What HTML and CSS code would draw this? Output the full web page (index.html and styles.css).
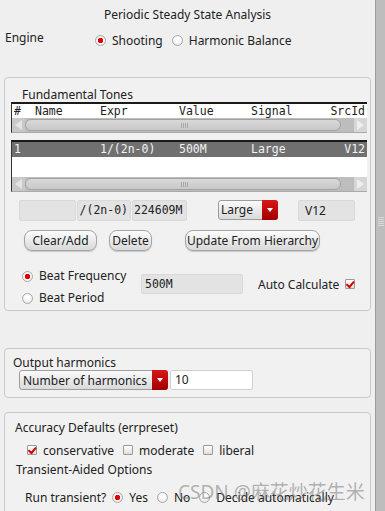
FILE: index.html
```html
<!DOCTYPE html>
<html lang="en">

<head>
  <meta charset="UTF-8">
  <meta name="viewport" content="width=device-width, initial-scale=1.0">
  <title>Periodic Steady State Analysis</title>
  <link rel="stylesheet" href="styles.css">
</head>

<body>
  <div class="window">
    <div class="main">
      <div class="title">Periodic Steady State Analysis</div>

      <div class="engine-row">
        <span class="engine-label">Engine</span>
        <label class="radio on">Shooting</label>
        <label class="radio">Harmonic Balance</label>
      </div>

      <!-- Fundamental tones -->
      <section class="panel tones">
        <div class="group-label">Fundamental Tones</div>

        <div class="table head-table">
          <div class="row header">
            <span class="c-num">#</span>
            <span class="c-name">Name</span>
            <span class="c-expr">Expr</span>
            <span class="c-value">Value</span>
            <span class="c-signal">Signal</span>
            <span class="c-src">SrcId</span>
          </div>
          <div class="hscroll">
            <span class="arrow left"></span>
            <span class="thumb"><span class="grip"></span></span>
            <span class="arrow right"></span>
          </div>
        </div>

        <div class="table body-table">
          <div class="row selected">
            <span class="c-num">1</span>
            <span class="c-name"></span>
            <span class="c-expr">1/(2n-0)</span>
            <span class="c-value">500M</span>
            <span class="c-signal">Large</span>
            <span class="c-src">V12</span>
          </div>
          <div class="blank"></div>
          <div class="hscroll">
            <span class="arrow left"></span>
            <span class="thumb"><span class="grip"></span></span>
            <span class="arrow right"></span>
          </div>
        </div>

        <div class="edit-row">
          <span class="field f-name"></span>
          <span class="field f-expr mono">/(2n-0)</span>
          <span class="field f-value mono">224609M</span>
          <span class="combo c-large">Large<span class="drop"></span></span>
          <span class="field f-src">V12</span>
        </div>

        <div class="button-row">
          <button class="btn b-clear">Clear/Add</button>
          <button class="btn b-delete">Delete</button>
          <button class="btn b-update">Update From Hierarchy</button>
        </div>

        <div class="beat-row">
          <div class="beat-choices">
            <label class="radio on">Beat Frequency</label>
            <label class="radio">Beat Period</label>
          </div>
          <span class="field f-beat mono">500M</span>
          <span class="auto">Auto Calculate <span class="check on"></span></span>
        </div>
      </section>

      <!-- Output harmonics -->
      <section class="panel harmonics">
        <div class="group-label">Output harmonics</div>
        <div class="harm-row">
          <span class="combo c-harm">Number of harmonics<span class="drop"></span></span>
          <span class="entry">10</span>
        </div>
      </section>

      <!-- Accuracy -->
      <section class="panel accuracy">
        <div class="group-label">Accuracy Defaults (errpreset)</div>
        <div class="check-row">
          <label class="check-item"><span class="check on"></span>conservative</label>
          <label class="check-item"><span class="check"></span>moderate</label>
          <label class="check-item"><span class="check"></span>liberal</label>
        </div>
        <div class="sub-label">Transient-Aided Options</div>
        <div class="tran-row">
          <span class="tran-label">Run transient?</span>
          <label class="radio on">Yes</label>
          <label class="radio">No</label>
          <label class="radio">Decide automatically</label>
        </div>
        <div class="watermark">CSDN @麻花炒花生米</div>
      </section>
    </div>

    <div class="vscroll"><span class="vgrip"></span></div>
  </div>
</body>

</html>
```

FILE: styles.css
```css
body {
  margin: 0;
  background-color: #efefef;
  color: #222;
  font-family: 'Noto Sans', 'Open Sans', sans-serif;
  font-size: 12px;
}

.window {
  display: flex;
  height: 511px;
  overflow: hidden;
}

.main {
  width: 375px;
}

.vscroll {
  width: 9px;
  border-left: 1px solid #9c9c9c;
  background-color: #bdbdbd;
  display: flex;
  justify-content: center;
}

.vgrip {
  margin-top: 217px;
  width: 6px;
  height: 9px;
  background: repeating-linear-gradient(#d8d8d8 0 1px, transparent 1px 2px);
}

.mono {
  font-family: 'DejaVu Sans Mono', monospace;
  font-size: 11.5px;
}

/* title + engine */
.title {
  text-align: center;
  line-height: 16px;
  padding-top: 7px;
}

.engine-row {
  display: flex;
  align-items: center;
  margin-top: 8px;
  height: 16px;
  padding-left: 5px;
}

.engine-label {
  width: 90px;
  margin-top: -3px;
}

.radio {
  display: inline-flex;
  align-items: center;
  white-space: nowrap;
}

.radio::before {
  content: '';
  width: 9px;
  height: 9px;
  margin-right: 6px;
  border-radius: 50%;
  border: 1px solid #a8a8a8;
  background: radial-gradient(circle at 50% 40%, #ffffff 30%, #dcdcdc 100%);
  box-sizing: content-box;
}

.radio.on::before {
  background: radial-gradient(circle, #e00000 0 2.5px, #ffffff 3px, #dcdcdc 100%);
}

.engine-row .radio {
  margin-right: 9px;
  margin-top: 3px;
}

/* panels */
.panel {
  margin-left: 4px;
  width: 365px;
  border: 1px solid #c9c9c9;
  border-radius: 4px;
  background-color: #f1f1f1;
  position: relative;
}

.group-label {
  line-height: 14px;
}

.tones {
  margin-top: 30px;
  height: 222px;
  padding-top: 10px;
}

.tones .group-label {
  padding-left: 17px;
  height: 14px;
}

/* tables */
.table {
  margin-left: 6px;
  width: 355px;
  background-color: #fff;
  border-top: 2px solid #1a1a1a;
  border-left: 1px solid #333;
  border-bottom: 1px solid #aaa;
  font-family: 'DejaVu Sans Mono', monospace;
  font-size: 11.5px;
}

.body-table {
  margin-top: 7px;
}

.row {
  display: flex;
  height: 14px;
  line-height: 14px;
  white-space: nowrap;
}

.row.selected {
  background-color: #707070;
  color: #f2f2f2;
  height: 15px;
  line-height: 15px;
}

.c-num {
  width: 21px;
  padding-left: 2px;
}

.c-name {
  width: 65px;
}

.c-expr {
  width: 79px;
}

.c-value {
  width: 72px;
}

.c-signal {
  width: 72px;
}

.c-src {
  flex: 1;
  text-align: right;
  padding-right: 2px;
}

.blank {
  height: 20px;
}

.hscroll {
  display: flex;
  height: 14px;
  background-color: #bdbdbd;
}

.arrow {
  width: 13px;
  background-color: #c9c9c9;
  display: flex;
  align-items: center;
  justify-content: center;
}

.arrow.right {
  background-color: #d6d6d6;
  margin-left: auto;
}

.arrow::before {
  content: '';
  width: 0;
  height: 0;
  border-top: 5px solid transparent;
  border-bottom: 5px solid transparent;
}

.arrow.left::before {
  border-right: 7px solid #e4e4e4;
}

.arrow.right::before {
  border-left: 7px solid #eeeeee;
}

.thumb {
  flex: none;
  width: 314px;
  margin: 1px 0;
  border: 1px solid #a2a2a2;
  border-radius: 7px;
  background: linear-gradient(#d9d9d9, #c8c8c8);
  display: flex;
  align-items: center;
  justify-content: center;
}

.grip {
  width: 8px;
  height: 5px;
  margin-left: 4px;
  background: repeating-linear-gradient(90deg, #a9a9a9 0 1px, transparent 1px 2px);
}

/* edit row */
.edit-row {
  display: flex;
  align-items: center;
  margin-top: 8px;
  height: 21px;
  padding-left: 14px;
}

.field {
  box-sizing: border-box;
  height: 21px;
  line-height: 19px;
  background-color: #e3e3e3;
  border: 1px solid #d9d9d9;
  border-radius: 2px;
  white-space: nowrap;
}

.f-name {
  width: 57px;
}

.f-expr {
  width: 54px;
  margin-left: 1px;
  text-align: right;
  padding-right: 2px;
}

.f-value {
  width: 55px;
  margin-left: 1px;
  padding-left: 1px;
}

.f-src {
  width: 57px;
  margin-left: 20px;
  padding-left: 6px;
}

.combo {
  box-sizing: border-box;
  display: flex;
  align-items: center;
  height: 20px;
  padding-left: 2px;
  border: 1px solid #9d9d9d;
  border-radius: 3px;
  background: linear-gradient(#fafafa, #dadada);
  white-space: nowrap;
}

.drop {
  margin-left: auto;
  width: 16px;
  align-self: stretch;
  margin-top: -1px;
  margin-bottom: -1px;
  margin-right: -1px;
  border-radius: 0 3px 3px 0;
  background: linear-gradient(#d81818, #a20000);
  display: flex;
  align-items: center;
  justify-content: center;
}

.drop::before {
  content: '';
  border-left: 3px solid transparent;
  border-right: 3px solid transparent;
  border-top: 4px solid #fff;
}

.c-large {
  width: 60px;
  margin-left: 31px;
  margin-top: -2px;
}

/* buttons */
.button-row {
  display: flex;
  margin-top: 9px;
  padding-left: 19px;
}

.btn {
  box-sizing: border-box;
  height: 21px;
  padding: 0;
  font-family: inherit;
  font-size: 12px;
  color: #222;
  border: 1px solid #a5a5a5;
  border-radius: 8px;
  background: linear-gradient(#fdfdfd, #d8d8d8);
  box-shadow: 0 1px 1px rgba(0, 0, 0, 0.18);
}

.b-clear {
  width: 73px;
}

.b-delete {
  width: 43px;
  margin-left: 12px;
}

.b-update {
  width: 135px;
  margin-left: 33px;
}

/* beat */
.beat-row {
  display: flex;
  align-items: center;
  margin-top: 17px;
  padding-left: 17px;
}

.beat-choices {
  display: flex;
  flex-direction: column;
  width: 119px;
}

.beat-choices .radio {
  height: 16px;
  line-height: 16px;
}

.beat-choices .radio + .radio {
  margin-top: 6px;
}

.f-beat {
  width: 102px;
  height: 20px;
  padding-left: 3px;
  margin-top: -6px;
}

.auto {
  display: flex;
  align-items: center;
  margin-left: 15px;
  margin-top: -6px;
  white-space: nowrap;
}

.auto .check {
  margin-left: 6px;
}

.check {
  display: inline-block;
  box-sizing: border-box;
  width: 10px;
  height: 10px;
  border: 1px solid #9a9a9a;
  border-radius: 1px;
  background: linear-gradient(#ffffff, #dedede);
  position: relative;
}

.check.on::after {
  content: '';
  position: absolute;
  left: 1px;
  top: -1px;
  width: 3px;
  height: 6px;
  border-right: 2px solid #d40000;
  border-bottom: 2px solid #d40000;
  transform: rotate(40deg) translate(1px, 0);
}

/* harmonics */
.harmonics {
  margin-top: 37px;
  height: 41px;
  padding-top: 7px;
}

.harmonics .group-label {
  padding-left: 8px;
}

.harm-row {
  display: flex;
  padding-left: 14px;
}

.c-harm {
  width: 149px;
  padding-left: 3px;
}

.entry {
  box-sizing: border-box;
  width: 83px;
  height: 20px;
  line-height: 18px;
  margin-left: 2px;
  padding-left: 4px;
  background-color: #fff;
  border: 1px solid #cfcfcf;
  border-radius: 2px;
}

/* accuracy */
.accuracy {
  margin-top: 14px;
  height: 120px;
  padding-top: 8px;
}

.accuracy .group-label {
  padding-left: 10px;
}

.check-row {
  display: flex;
  align-items: center;
  margin-top: 8px;
  padding-left: 22px;
  height: 14px;
}

.check-item {
  display: flex;
  align-items: center;
  margin-right: 9px;
}

.check-item .check {
  margin-right: 6px;
}

.sub-label {
  margin-top: 6px;
  padding-left: 11px;
  line-height: 14px;
}

.tran-row {
  display: flex;
  align-items: center;
  margin-top: 13px;
  padding-left: 20px;
  height: 14px;
}

.tran-label {
  margin-right: 6px;
}

.tran-row .radio {
  margin-right: 9px;
}

.watermark {
  position: absolute;
  left: 173px;
  top: 64px;
  font-size: 19px;
  color: rgba(120, 120, 120, 0.55);
  white-space: nowrap;
  font-family: 'Noto Sans', 'Noto Sans CJK SC', sans-serif;
}
```
